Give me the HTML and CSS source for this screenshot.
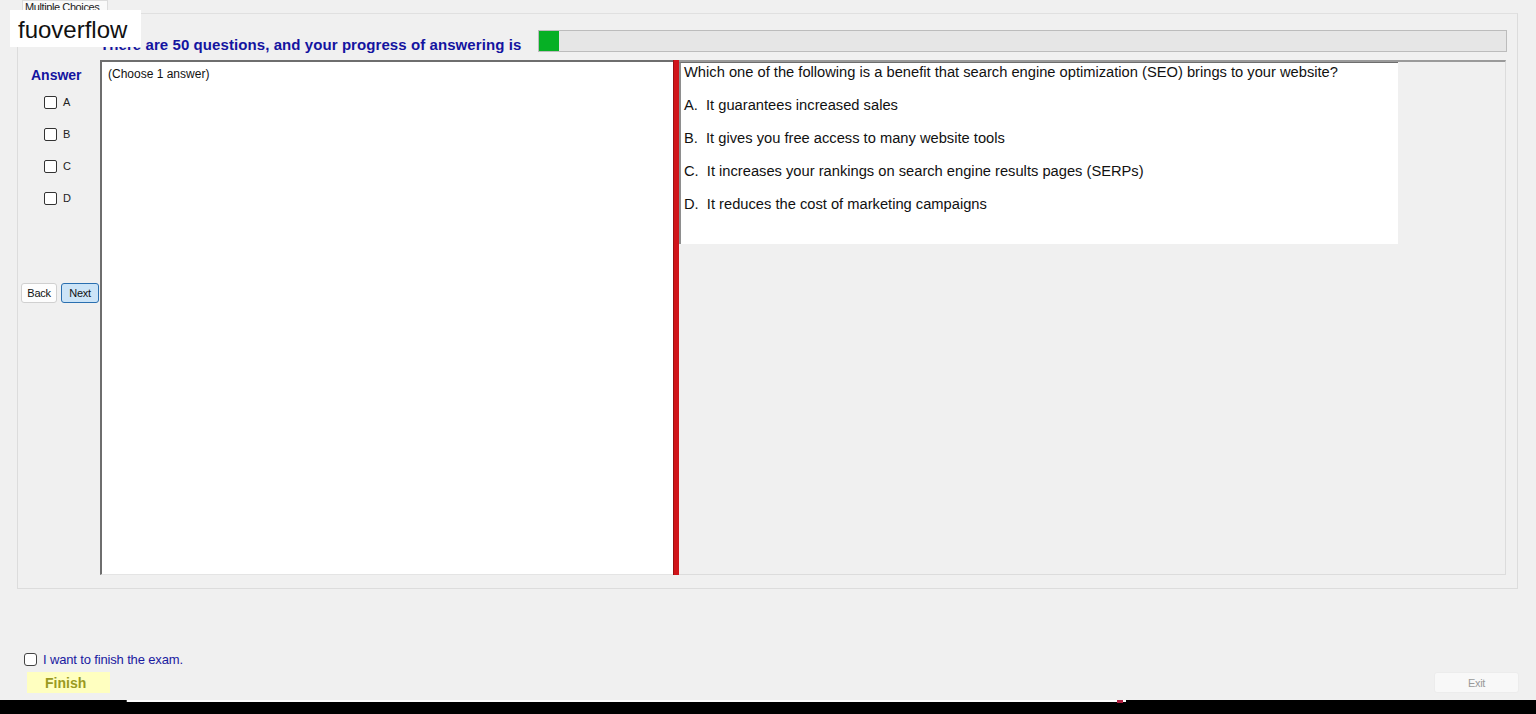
FILE: index.html
```html
<!DOCTYPE html>
<html lang="en">
<head>
    <meta charset="UTF-8">
    <title>Exam</title>
    <link rel="stylesheet" href="styles.css">
</head>
<body>
    <div class="brand">fuoverflow</div>
    <div class="tabs">
        <div class="tab">Multiple Choices</div>
    </div>
    <div class="page">
        <div class="header">
            <div class="title">There are 50 questions, and your progress of answering is</div>
            <div class="progress"><div class="progress-fill" style="width: 20px"></div></div>
        </div>
        <div class="main">
            <div class="sidebar">
                <div class="answer-label">Answer</div>
                <ul class="choices">
                    <li><span class="box"></span>A</li>
                    <li><span class="box"></span>B</li>
                    <li><span class="box"></span>C</li>
                    <li><span class="box"></span>D</li>
                </ul>
                <div class="nav">
                    <button class="btn">Back</button>
                    <button class="btn btn-focus">Next</button>
                </div>
            </div>
            <div class="notes">(Choose 1 answer)</div>
            <div class="splitter"></div>
            <div class="question-panel">
                <div class="question">
                    <p>Which one of the following is a benefit that search engine optimization (SEO) brings to your website?</p>
                    <p>A.&nbsp; It guarantees increased sales</p>
                    <p>B.&nbsp; It gives you free access to many website tools</p>
                    <p>C.&nbsp; It increases your rankings on search engine results pages (SERPs)</p>
                    <p>D.&nbsp; It reduces the cost of marketing campaigns</p>
                </div>
            </div>
        </div>
    </div>
    <div class="footer">
        <label class="finish-check"><span class="box"></span>I want to finish the exam.</label>
        <div class="footer-row">
            <button class="finish">Finish</button>
            <button class="exit">Exit</button>
        </div>
    </div>
    <div class="taskbar">
        <div class="strip"><span class="mark"></span></div>
    </div>
</body>
</html>
```
FILE: styles.css
```css
* {
    margin: 0;
    padding: 0;
    box-sizing: border-box;
}
body {
    width: 1536px;
    height: 714px;
    overflow: hidden;
    background: #f0f0f0;
    font-family: "Liberation Sans", Arial, sans-serif;
    display: flex;
    flex-direction: column;
    position: relative;
}
.brand {
    position: absolute;
    left: 10px;
    top: 10px;
    width: 131px;
    height: 37px;
    background: #fff;
    font-size: 24px;
    color: #111;
    padding: 6px 0 0 8px;
    z-index: 2;
}
.tabs {
    height: 13px;
    padding-left: 22px;
    display: flex;
}
.tab {
    width: 86px;
    height: 14px;
    background: #fafafa;
    border: 1px solid #dcdcdc;
    border-bottom: none;
    font-size: 11px;
    letter-spacing: -0.4px;
    color: #222;
    padding-left: 2px;
    line-height: 12px;
}
.page {
    margin-left: 17px;
    width: 1501px;
    height: 576px;
    border: 1px solid #dcdcdc;
    border-top-color: #e0e0e0;
    display: flex;
    flex-direction: column;
}
.header {
    display: flex;
    align-items: flex-end;
    height: 38px;
    padding-left: 82px;
}
.title {
    color: #1414a0;
    font-weight: bold;
    font-size: 15px;
    letter-spacing: 0.08px;
    width: 438px;
    margin-bottom: -1px;
}
.progress {
    width: 969px;
    height: 22px;
    background: #e6e6e6;
    border: 1px solid #bcbcbc;
}
.progress-fill {
    height: 100%;
    background: #06b025;
}
.main {
    display: flex;
    margin-top: 8px;
    height: 515px;
}
.sidebar {
    width: 82px;
    display: flex;
    flex-direction: column;
}
.answer-label {
    color: #1414a0;
    font-weight: bold;
    font-size: 14px;
    margin: 7px 0 0 13px;
}
.choices {
    list-style: none;
    margin: 3px 0 0 26px;
}
.choices li {
    height: 32px;
    font-size: 11px;
    color: #222;
    display: flex;
    align-items: center;
}
.box {
    display: inline-block;
    width: 13px;
    height: 13px;
    border: 1px solid #333;
    border-radius: 2px;
    background: #fff;
    margin-right: 6px;
}
.nav {
    display: flex;
    gap: 4px;
    margin: 69px 0 0 3px;
}
.btn {
    height: 20px;
    width: 36px;
    font-family: "Liberation Sans", Arial, sans-serif;
    font-size: 11px;
    letter-spacing: -0.3px;
    color: #111;
    background: #fdfdfd;
    border: 1px solid #d0d0d0;
    border-radius: 3px;
    padding: 0;
}
.btn-focus {
    background: #cce4f7;
    border-color: #2a6fb0;
    width: 38px;
}
.notes {
    width: 573px;
    background: #fff;
    border-top: 2px solid #6e6e6e;
    border-left: 2px solid #6e6e6e;
    border-bottom: 1px solid #e4e4e4;
    font-size: 12px;
    color: #111;
    padding: 5px 6px;
}
.splitter {
    width: 6px;
    background: #d0141a;
    border-left: 1px solid #9a1010;
}
.question-panel {
    width: 827px;
    border-top: 2px solid #9a9a9a;
    border-right: 1px solid #dcdcdc;
    border-bottom: 1px solid #dcdcdc;
}
.question {
    width: 719px;
    height: 182px;
    background: #fff;
    border-left: 2px solid #8e8e8e;
    border-top: 1px solid #6e6e6e;
    padding: 0 0 0 3px;
    font-size: 14.7px;
    color: #111;
}
.question p {
    height: 33px;
    line-height: 18px;
}
.footer {
    flex: 1;
    display: flex;
    flex-direction: column;
    justify-content: flex-end;
    padding-bottom: 7px;
}
.finish-check {
    display: flex;
    align-items: center;
    margin-left: 24px;
    font-size: 13px;
    letter-spacing: -0.15px;
    color: #1a1aa0;
    position: relative;
    top: 1px;
}
.finish-check .box {
    border-color: #444;
    border-radius: 3px;
}
.footer-row {
    display: flex;
    justify-content: space-between;
    align-items: center;
    margin-top: 6px;
}
.finish {
    margin-left: 27px;
    width: 83px;
    height: 21px;
    background: #ffffc0;
    border: none;
    color: #9a9a22;
    font-family: "Liberation Sans", Arial, sans-serif;
    font-weight: bold;
    font-size: 14px;
    text-align: left;
    padding-left: 18px;
}
.exit {
    margin-right: 17px;
    width: 85px;
    height: 21px;
    background: #f8f8f8;
    border: 1px solid #ececec;
    border-radius: 3px;
    color: #9a9a9a;
    font-family: "Liberation Sans", Arial, sans-serif;
    font-size: 11px;
    letter-spacing: -0.3px;
}
.taskbar {
    height: 14px;
    background: #000;
}
.strip {
    margin-left: 126px;
    width: 1000px;
    height: 2px;
    background: #fff;
    border-left: 1px solid #444;
    position: relative;
}
.mark {
    position: absolute;
    left: 990px;
    top: 0;
    width: 6px;
    height: 3px;
    background: #b02040;
}
```
